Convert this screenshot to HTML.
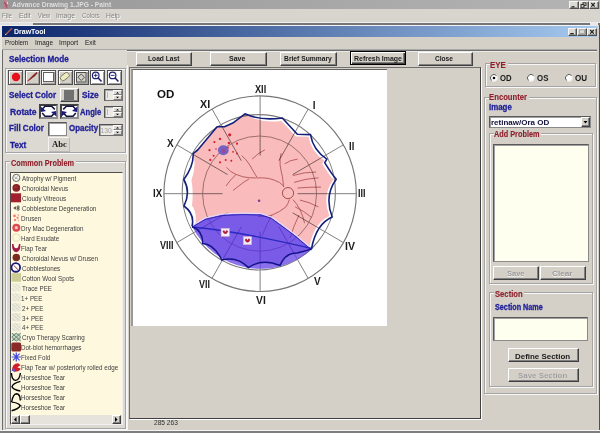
<!DOCTYPE html><html><head><meta charset="utf-8"><style>
html,body{margin:0;padding:0;width:600px;height:433px;overflow:hidden;background:#d4d0c8}
body>div,body>svg{position:absolute}
</style></head><body>
<div style="left:0px;top:0px;width:600px;height:9px;background:linear-gradient(90deg,#989898,#b4b4b4);"></div>
<div style="left:11.81px;top:0.59px;font:bold 7.40px/8.88px 'Liberation Sans',sans-serif;color:#dedede;white-space:nowrap;transform:scaleX(0.904);transform-origin:0.19px 0;">Advance Drawing 1.JPG - Paint</div>
<div style="left:569px;top:1px;width:10px;height:8px;background:#dcdad4;border-top:1px solid #f4f4f4;border-left:1px solid #f4f4f4;border-right:1px solid #505050;border-bottom:1px solid #505050;box-sizing:border-box;box-shadow:inset -1px -1px #989898;"></div>
<div style="left:579px;top:1px;width:10px;height:8px;background:#dcdad4;border-top:1px solid #f4f4f4;border-left:1px solid #f4f4f4;border-right:1px solid #505050;border-bottom:1px solid #505050;box-sizing:border-box;box-shadow:inset -1px -1px #989898;"></div>
<div style="left:589px;top:1px;width:10px;height:8px;background:#dcdad4;border-top:1px solid #f4f4f4;border-left:1px solid #f4f4f4;border-right:1px solid #505050;border-bottom:1px solid #505050;box-sizing:border-box;box-shadow:inset -1px -1px #989898;"></div>
<svg style="left:569px;top:1px" width="30" height="8"><path d="M2.5 5.8 H5.5" stroke="#202020" stroke-width="1.2"/><rect x="14" y="1.8" width="3" height="2.6" fill="none" stroke="#202020" stroke-width="0.9"/><rect x="12" y="3.6" width="3" height="2.6" fill="#dcdad4" stroke="#202020" stroke-width="0.9"/><path d="M22.3 2 L25.7 5.6 M25.7 2 L22.3 5.6" stroke="#202020" stroke-width="1.1"/></svg>
<svg style="left:0px;top:0px" width="10" height="9"><rect x="0.5" y="2" width="3" height="5" fill="#8a9a90" opacity="0.6"/><path d="M3.5 0.5 L7.5 1 L8.3 8.8 L4 8.8 Z" fill="#c07a8a"/><path d="M4.5 2 L7 7.5" stroke="#8a4050" stroke-width="0.9"/><path d="M7.2 1.5 L7.6 4" stroke="#f0e0e8" stroke-width="0.9"/></svg>
<div style="left:0px;top:9px;width:600px;height:13px;background:#d8d5ce;"></div>
<div style="left:3.02px;top:12.69px;font:normal 7.30px/8.76px 'Liberation Sans',sans-serif;color:#ffffff;white-space:nowrap;transform:scaleX(0.827);transform-origin:0.58px 0;">File</div>
<div style="left:2.42px;top:12.09px;font:normal 7.30px/8.76px 'Liberation Sans',sans-serif;color:#808080;white-space:nowrap;transform:scaleX(0.827);transform-origin:0.58px 0;">File</div>
<div style="left:20.02px;top:12.69px;font:normal 7.30px/8.76px 'Liberation Sans',sans-serif;color:#ffffff;white-space:nowrap;transform:scaleX(0.922);transform-origin:0.58px 0;">Edit</div>
<div style="left:19.42px;top:12.09px;font:normal 7.30px/8.76px 'Liberation Sans',sans-serif;color:#808080;white-space:nowrap;transform:scaleX(0.922);transform-origin:0.58px 0;">Edit</div>
<div style="left:38.56px;top:12.69px;font:normal 7.30px/8.76px 'Liberation Sans',sans-serif;color:#ffffff;white-space:nowrap;transform:scaleX(0.766);transform-origin:0.04px 0;">View</div>
<div style="left:37.96px;top:12.09px;font:normal 7.30px/8.76px 'Liberation Sans',sans-serif;color:#808080;white-space:nowrap;transform:scaleX(0.766);transform-origin:0.04px 0;">View</div>
<div style="left:56.94px;top:12.69px;font:normal 7.30px/8.76px 'Liberation Sans',sans-serif;color:#ffffff;white-space:nowrap;transform:scaleX(0.930);transform-origin:0.66px 0;">Image</div>
<div style="left:56.34px;top:12.09px;font:normal 7.30px/8.76px 'Liberation Sans',sans-serif;color:#808080;white-space:nowrap;transform:scaleX(0.930);transform-origin:0.66px 0;">Image</div>
<div style="left:82.23px;top:12.69px;font:normal 7.30px/8.76px 'Liberation Sans',sans-serif;color:#ffffff;white-space:nowrap;transform:scaleX(0.830);transform-origin:0.36px 0;">Colors</div>
<div style="left:81.64px;top:12.09px;font:normal 7.30px/8.76px 'Liberation Sans',sans-serif;color:#808080;white-space:nowrap;transform:scaleX(0.830);transform-origin:0.36px 0;">Colors</div>
<div style="left:107.02px;top:12.69px;font:normal 7.30px/8.76px 'Liberation Sans',sans-serif;color:#ffffff;white-space:nowrap;transform:scaleX(0.920);transform-origin:0.58px 0;">Help</div>
<div style="left:106.42px;top:12.09px;font:normal 7.30px/8.76px 'Liberation Sans',sans-serif;color:#808080;white-space:nowrap;transform:scaleX(0.920);transform-origin:0.58px 0;">Help</div>
<div style="left:0px;top:22px;width:600px;height:1px;background:#ececec;"></div>
<div style="left:33px;top:23px;width:567px;height:2px;background:#767676;"></div>
<div style="left:0px;top:23px;width:33px;height:2px;background:#dedede;"></div>
<div style="left:0px;top:25px;width:600px;height:408px;background:#d4d0c8;"></div>
<div style="left:0px;top:25px;width:600px;height:1px;background:#f2f2f6;"></div>
<div style="left:0px;top:26px;width:2px;height:407px;background:#e8e6e0;"></div>
<div style="left:2px;top:26px;width:596px;height:11px;background:linear-gradient(90deg,#0a246a 0%,#a6caf0 100%);"></div>
<svg style="left:4px;top:27px" width="9" height="9"><path d="M1.2 8 L8 1.2" stroke="#b05a40" stroke-width="1.3"/><path d="M1.2 8 L2.4 6.8" stroke="#e8d0c0" stroke-width="1"/></svg>
<div style="left:13.56px;top:28.16px;font:bold 6.80px/8.16px 'Liberation Sans',sans-serif;color:#ffffff;white-space:nowrap;transform:scaleX(1.031);transform-origin:0.44px 0;">DrawTool</div>
<div style="left:568px;top:28px;width:9px;height:8px;background:#dcdad4;border-top:1px solid #f4f4f4;border-left:1px solid #f4f4f4;border-right:1px solid #505050;border-bottom:1px solid #505050;box-sizing:border-box;box-shadow:inset -1px -1px #989898;"></div>
<div style="left:577px;top:28px;width:10px;height:8px;background:#dcdad4;border-top:1px solid #f4f4f4;border-left:1px solid #f4f4f4;border-right:1px solid #505050;border-bottom:1px solid #505050;box-sizing:border-box;box-shadow:inset -1px -1px #989898;"></div>
<div style="left:587px;top:28px;width:10px;height:8px;background:#dcdad4;border-top:1px solid #f4f4f4;border-left:1px solid #f4f4f4;border-right:1px solid #505050;border-bottom:1px solid #505050;box-sizing:border-box;box-shadow:inset -1px -1px #989898;"></div>
<svg style="left:568px;top:28px" width="30" height="8"><path d="M2.3 5.6 H5.7" stroke="#202020" stroke-width="1.2"/><rect x="11.5" y="1.8" width="5" height="3.6" fill="none" stroke="#a0a0a0" stroke-width="0.9"/><path d="M22.2 2 L25.8 5.6 M25.8 2 L22.2 5.6" stroke="#202020" stroke-width="1.2"/></svg>
<div style="left:597px;top:25px;width:2px;height:408px;background:#d4d0c8;"></div>
<div style="left:599px;top:25px;width:1px;height:408px;background:#505050;"></div>
<div style="left:590px;top:23px;width:8px;height:3px;background:#e8e8e8;"></div>
<div style="left:5.02px;top:38.99px;font:normal 7.30px/8.76px 'Liberation Sans',sans-serif;color:#202020;white-space:nowrap;transform:scaleX(0.849);transform-origin:0.58px 0;">Problem</div>
<div style="left:34.54px;top:38.99px;font:normal 7.30px/8.76px 'Liberation Sans',sans-serif;color:#202020;white-space:nowrap;transform:scaleX(0.884);transform-origin:0.66px 0;">Image</div>
<div style="left:59.04px;top:38.99px;font:normal 7.30px/8.76px 'Liberation Sans',sans-serif;color:#202020;white-space:nowrap;transform:scaleX(0.927);transform-origin:0.66px 0;">Import</div>
<div style="left:85.02px;top:38.99px;font:normal 7.30px/8.76px 'Liberation Sans',sans-serif;color:#202020;white-space:nowrap;transform:scaleX(0.884);transform-origin:0.58px 0;">Exit</div>
<div style="left:2px;top:49px;width:595px;height:1px;background:#a8a8a8;"></div>
<div style="left:2px;top:50px;width:595px;height:1px;background:#6e6e6e;"></div>
<div style="left:3px;top:51px;width:594px;height:1px;background:#eceae6;"></div>
<div style="left:2px;top:50px;width:1px;height:380px;background:#6a6a6a;"></div>
<div style="left:3px;top:50px;width:124px;height:380px;background:#dcd9d2;"></div>
<div style="left:127px;top:65px;width:1px;height:365px;background:#f4f4f4;"></div>
<div style="left:8.63px;top:53.97px;font:bold 8.90px/10.68px 'Liberation Sans',sans-serif;color:#1e1e98;white-space:nowrap;transform:scaleX(0.919);transform-origin:0.27px 0;-webkit-text-stroke:0.3px #1e1e98;">Selection Mode</div>
<div style="left:5px;top:68px;width:121px;height:85px;border:1px solid #a4a4a4;box-sizing:border-box;box-shadow:1px 1px #f8f8f8, inset 1px 1px #f8f8f8;"></div>
<div style="left:8px;top:70px;width:15px;height:15px;background:#d4d0c8;border:1px solid #505050;box-sizing:border-box;box-shadow:inset 1px 1px #fff, inset -1px -1px #a0a0a0;"></div>
<div style="left:25px;top:70px;width:15px;height:15px;background:#d4d0c8;border:1px solid #505050;box-sizing:border-box;box-shadow:inset 1px 1px #fff, inset -1px -1px #a0a0a0;"></div>
<div style="left:41px;top:70px;width:15px;height:15px;background:#d4d0c8;border:1px solid #505050;box-sizing:border-box;box-shadow:inset 1px 1px #fff, inset -1px -1px #a0a0a0;"></div>
<div style="left:58px;top:70px;width:15px;height:15px;background:#d4d0c8;border:1px solid #505050;box-sizing:border-box;box-shadow:inset 1px 1px #fff, inset -1px -1px #a0a0a0;"></div>
<div style="left:74px;top:70px;width:15px;height:15px;background:#d4d0c8;border:1px solid #505050;box-sizing:border-box;box-shadow:inset 1px 1px #fff, inset -1px -1px #a0a0a0;"></div>
<div style="left:90px;top:70px;width:15px;height:15px;background:#fff;border:1px solid #505050;box-sizing:border-box;box-shadow:inset 1px 1px #fff, inset -1px -1px #a0a0a0;"></div>
<div style="left:107px;top:70px;width:15px;height:15px;background:#fff;border:1px solid #505050;box-sizing:border-box;box-shadow:inset 1px 1px #fff, inset -1px -1px #a0a0a0;"></div>
<svg style="left:0;top:0" width="130" height="160"><circle cx="16" cy="77" r="4.2" fill="#e8101c"/><path d="M27.2 81 L33.6 74.6 L36.6 72 Q37.8 72.4 37.3 73.6 L34.8 76.2 L28 81.6 Z" fill="#8a2424"/><path d="M27.2 81 L29 79.6" stroke="#d08080" stroke-width="0.8"/><rect x="43.5" y="72.5" width="10" height="9" fill="#fff" stroke="#606060" stroke-width="1"/><rect x="-4.8" y="-2.6" width="9.6" height="5.2" rx="2" transform="translate(64.8 76.6) rotate(-38)" fill="#ecebc0" stroke="#6a6a58" stroke-width="0.8"/><rect x="76.5" y="72.5" width="9.5" height="9.5" fill="none" stroke="#505050" stroke-width="1"/><path d="M81.2 74 L84.5 77.2 L81.2 80.5 L78 77.2 Z" fill="none" stroke="#505050" stroke-width="1"/><circle cx="95.7" cy="75.4" r="3.3" fill="#fff" stroke="#202070" stroke-width="1.2"/><path d="M98 77.8 L101.5 81.5" stroke="#202070" stroke-width="1.6"/><path d="M93.8 75.4 H97.6 M95.7 73.5 V77.3" stroke="#202070" stroke-width="0.9"/><circle cx="112.6" cy="75.4" r="3.3" fill="#fff" stroke="#202070" stroke-width="1.2"/><path d="M114.9 77.8 L118.4 81.5" stroke="#202070" stroke-width="1.6"/><path d="M110.7 75.4 H114.5" stroke="#202070" stroke-width="0.9"/></svg>
<div style="left:9.44px;top:90.26px;font:bold 8.60px/10.32px 'Liberation Sans',sans-serif;color:#1e1e98;white-space:nowrap;transform:scaleX(0.940);transform-origin:0.26px 0;-webkit-text-stroke:0.3px #1e1e98;">Select Color</div>
<div style="left:60px;top:88px;width:19px;height:14px;background:#d4d0c8;border-top:1px solid #fff;border-left:1px solid #fff;border-right:1px solid #404040;border-bottom:1px solid #404040;box-sizing:border-box;box-shadow:inset -1px -1px #808080;"></div>
<div style="left:64px;top:90px;width:10px;height:10px;background:#707070;"></div>
<div style="left:81.54px;top:90.26px;font:bold 8.60px/10.32px 'Liberation Sans',sans-serif;color:#1e1e98;white-space:nowrap;transform:scaleX(0.971);transform-origin:0.26px 0;-webkit-text-stroke:0.3px #1e1e98;">Size</div>
<div style="left:104px;top:89px;width:19px;height:12px;background:#eceae4;border:1px solid #505050;border-right-color:#707070;border-bottom-color:#707070;box-sizing:border-box;box-shadow:inset 1px 1px #a8a8a8;"></div>
<div style="left:113px;top:90px;width:9px;height:5px;background:#dedbd4;border-left:1px solid #fff;border-top:1px solid #fff;border-right:1px solid #808080;border-bottom:1px solid #808080;box-sizing:border-box;"></div>
<div style="left:113px;top:95px;width:9px;height:5px;background:#dedbd4;border-left:1px solid #fff;border-top:1px solid #fff;border-right:1px solid #808080;border-bottom:1px solid #808080;box-sizing:border-box;"></div>
<svg style="left:113px;top:89px" width="9" height="12"><path d="M3 4.5 L4.5 2.9 L6 4.5Z M3 7.7 L4.5 9.3 L6 7.7Z" fill="#000"/></svg>
<div style="left:107px;top:92px;width:1px;height:6px;background:#b8b8b8;"></div>
<div style="left:9.94px;top:107.26px;font:bold 8.60px/10.32px 'Liberation Sans',sans-serif;color:#1e1e98;white-space:nowrap;transform:scaleX(0.995);transform-origin:0.56px 0;-webkit-text-stroke:0.3px #1e1e98;">Rotate</div>
<div style="left:39px;top:104px;width:19px;height:15px;background:#fff;border:2px solid #404040;border-right-color:#909090;border-bottom-color:#909090;box-sizing:border-box;"></div>
<svg style="left:39px;top:104px" width="19" height="15"><g ><path d="M3.2 5.2 L6 2.3 L12.6 2.3 L15.8 5.4" fill="none" stroke="#141440" stroke-width="1.6"/><path d="M15.8 8.6 L12.6 12.2 L6 12.2 L3.2 9" fill="none" stroke="#141440" stroke-width="1.6"/><path d="M1.6 2.4 L1.9 8 L7 7 Z" fill="#1a1a80"/><path d="M17.4 12.6 L17.1 7 L12 8 Z" fill="#1a1a80"/></g></svg>
<div style="left:60px;top:104px;width:19px;height:15px;background:#fff;border:2px solid #404040;border-right-color:#909090;border-bottom-color:#909090;box-sizing:border-box;"></div>
<svg style="left:60px;top:104px" width="19" height="15"><g transform="translate(19,0) scale(-1,1)"><path d="M3.2 5.2 L6 2.3 L12.6 2.3 L15.8 5.4" fill="none" stroke="#141440" stroke-width="1.6"/><path d="M15.8 8.6 L12.6 12.2 L6 12.2 L3.2 9" fill="none" stroke="#141440" stroke-width="1.6"/><path d="M1.6 2.4 L1.9 8 L7 7 Z" fill="#1a1a80"/><path d="M17.4 12.6 L17.1 7 L12 8 Z" fill="#1a1a80"/></g></svg>
<div style="left:80.48px;top:107.06px;font:bold 8.60px/10.32px 'Liberation Sans',sans-serif;color:#1e1e98;white-space:nowrap;transform:scaleX(0.889);transform-origin:0.21px 0;-webkit-text-stroke:0.3px #1e1e98;">Angle</div>
<div style="left:104px;top:106px;width:19px;height:12px;background:#eceae4;border:1px solid #505050;border-right-color:#707070;border-bottom-color:#707070;box-sizing:border-box;box-shadow:inset 1px 1px #a8a8a8;"></div>
<div style="left:113px;top:107px;width:9px;height:5px;background:#dedbd4;border-left:1px solid #fff;border-top:1px solid #fff;border-right:1px solid #808080;border-bottom:1px solid #808080;box-sizing:border-box;"></div>
<div style="left:113px;top:112px;width:9px;height:5px;background:#dedbd4;border-left:1px solid #fff;border-top:1px solid #fff;border-right:1px solid #808080;border-bottom:1px solid #808080;box-sizing:border-box;"></div>
<svg style="left:113px;top:106px" width="9" height="12"><path d="M3 4.5 L4.5 2.9 L6 4.5Z M3 7.7 L4.5 9.3 L6 7.7Z" fill="#000"/></svg>
<div style="left:107px;top:109px;width:1px;height:6px;background:#b8b8b8;"></div>
<div style="left:8.84px;top:123.36px;font:bold 8.60px/10.32px 'Liberation Sans',sans-serif;color:#1e1e98;white-space:nowrap;transform:scaleX(0.935);transform-origin:0.56px 0;-webkit-text-stroke:0.3px #1e1e98;">Fill Color</div>
<div style="left:48px;top:122px;width:19px;height:14px;background:#fff;border:1px solid #5a5a5a;border-right-color:#8a8a8a;border-bottom-color:#8a8a8a;box-sizing:border-box;box-shadow:inset 1px 1px #a0a0a0;"></div>
<div style="left:68.66px;top:123.16px;font:bold 8.60px/10.32px 'Liberation Sans',sans-serif;color:#1e1e98;white-space:nowrap;transform:scaleX(0.922);transform-origin:0.34px 0;-webkit-text-stroke:0.3px #1e1e98;">Opacity</div>
<div style="left:99px;top:124px;width:24px;height:12px;background:#eceae4;border:1px solid #505050;border-right-color:#707070;border-bottom-color:#707070;box-sizing:border-box;box-shadow:inset 1px 1px #a8a8a8;"></div>
<div style="left:113px;top:125px;width:9px;height:5px;background:#dedbd4;border-left:1px solid #fff;border-top:1px solid #fff;border-right:1px solid #808080;border-bottom:1px solid #808080;box-sizing:border-box;"></div>
<div style="left:113px;top:130px;width:9px;height:5px;background:#dedbd4;border-left:1px solid #fff;border-top:1px solid #fff;border-right:1px solid #808080;border-bottom:1px solid #808080;box-sizing:border-box;"></div>
<svg style="left:113px;top:124px" width="9" height="12"><path d="M3 4.5 L4.5 2.9 L6 4.5Z M3 7.7 L4.5 9.3 L6 7.7Z" fill="#000"/></svg>
<div style="left:100.49px;top:126.61px;font:normal 6.75px/8.1px 'Liberation Sans',sans-serif;color:#a0a0a0;white-space:nowrap;">130</div>
<div style="left:9.61px;top:139.56px;font:bold 8.60px/10.32px 'Liberation Sans',sans-serif;color:#1e1e98;white-space:nowrap;transform:scaleX(0.955);transform-origin:0.09px 0;-webkit-text-stroke:0.3px #1e1e98;">Text</div>
<div style="left:48px;top:137px;width:22px;height:15px;background:#d8d5ce;border-top:1px solid #f4f4f4;border-left:1px solid #f4f4f4;border-right:1px solid #b8b8b8;border-bottom:1px solid #b8b8b8;box-sizing:border-box;"></div>
<div style="left:51.51px;top:138.94px;font:bold 8.60px/10.32px 'Liberation Serif',serif;color:#202020;white-space:nowrap;transform:scaleX(1.005);transform-origin:0.09px 0;">Abc</div>
<div style="left:5px;top:161px;width:121px;height:268px;border:1px solid #a4a4a4;box-sizing:border-box;box-shadow:1px 1px #f8f8f8, inset 1px 1px #f8f8f8;"></div>
<div style="left:10px;top:157px;width:66px;height:8px;background:#dcd9d2;"></div>
<div style="left:11.05px;top:157.87px;font:bold 8.80px/10.56px 'Liberation Sans',sans-serif;color:#8e1e2a;white-space:nowrap;transform:scaleX(0.830);transform-origin:0.35px 0;-webkit-text-stroke:0.12px #8e1e2a;">Common Problem</div>
<div style="left:10px;top:172px;width:113px;height:253px;background:#fdf8de;border-top:1px solid #505050;border-left:1px solid #505050;border-right:1px solid #f0f0f0;border-bottom:1px solid #f0f0f0;box-sizing:border-box;"></div>
<div style="left:22.00px;top:174.21px;font:normal 7.60px/9.12px 'Liberation Sans',sans-serif;color:#3c3c3c;white-space:nowrap;transform:scaleX(0.822);transform-origin:0.00px 0;">Atrophy w/ Pigment</div>
<div style="left:21.62px;top:184.16px;font:normal 7.60px/9.12px 'Liberation Sans',sans-serif;color:#3c3c3c;white-space:nowrap;transform:scaleX(0.822);transform-origin:0.38px 0;">Choroidal Nevus</div>
<div style="left:21.62px;top:194.11px;font:normal 7.60px/9.12px 'Liberation Sans',sans-serif;color:#3c3c3c;white-space:nowrap;transform:scaleX(0.822);transform-origin:0.38px 0;">Cloudy Vitreous</div>
<div style="left:21.62px;top:204.06px;font:normal 7.60px/9.12px 'Liberation Sans',sans-serif;color:#3c3c3c;white-space:nowrap;transform:scaleX(0.822);transform-origin:0.38px 0;">Cobblestone Degeneration</div>
<div style="left:21.39px;top:214.01px;font:normal 7.60px/9.12px 'Liberation Sans',sans-serif;color:#3c3c3c;white-space:nowrap;transform:scaleX(0.822);transform-origin:0.61px 0;">Drusen</div>
<div style="left:21.39px;top:223.96px;font:normal 7.60px/9.12px 'Liberation Sans',sans-serif;color:#3c3c3c;white-space:nowrap;transform:scaleX(0.822);transform-origin:0.61px 0;">Dry Mac Degeneration</div>
<div style="left:21.39px;top:233.91px;font:normal 7.60px/9.12px 'Liberation Sans',sans-serif;color:#3c3c3c;white-space:nowrap;transform:scaleX(0.822);transform-origin:0.61px 0;">Hard Exudate</div>
<div style="left:21.39px;top:243.86px;font:normal 7.60px/9.12px 'Liberation Sans',sans-serif;color:#3c3c3c;white-space:nowrap;transform:scaleX(0.822);transform-origin:0.61px 0;">Flap Tear</div>
<div style="left:21.62px;top:253.81px;font:normal 7.60px/9.12px 'Liberation Sans',sans-serif;color:#3c3c3c;white-space:nowrap;transform:scaleX(0.822);transform-origin:0.38px 0;">Choroidal Nevus w/ Drusen</div>
<div style="left:21.62px;top:263.76px;font:normal 7.60px/9.12px 'Liberation Sans',sans-serif;color:#3c3c3c;white-space:nowrap;transform:scaleX(0.822);transform-origin:0.38px 0;">Cobblestones</div>
<div style="left:21.62px;top:273.71px;font:normal 7.60px/9.12px 'Liberation Sans',sans-serif;color:#3c3c3c;white-space:nowrap;transform:scaleX(0.822);transform-origin:0.38px 0;">Cotton Wool Spots</div>
<div style="left:21.85px;top:283.66px;font:normal 7.60px/9.12px 'Liberation Sans',sans-serif;color:#3c3c3c;white-space:nowrap;transform:scaleX(0.822);transform-origin:0.15px 0;">Trace PEE</div>
<div style="left:21.43px;top:293.61px;font:normal 7.60px/9.12px 'Liberation Sans',sans-serif;color:#3c3c3c;white-space:nowrap;transform:scaleX(0.822);transform-origin:0.57px 0;">1+ PEE</div>
<div style="left:21.62px;top:303.56px;font:normal 7.60px/9.12px 'Liberation Sans',sans-serif;color:#3c3c3c;white-space:nowrap;transform:scaleX(0.822);transform-origin:0.38px 0;">2+ PEE</div>
<div style="left:21.70px;top:313.51px;font:normal 7.60px/9.12px 'Liberation Sans',sans-serif;color:#3c3c3c;white-space:nowrap;transform:scaleX(0.822);transform-origin:0.30px 0;">3+ PEE</div>
<div style="left:21.85px;top:323.46px;font:normal 7.60px/9.12px 'Liberation Sans',sans-serif;color:#3c3c3c;white-space:nowrap;transform:scaleX(0.822);transform-origin:0.15px 0;">4+ PEE</div>
<div style="left:21.62px;top:333.41px;font:normal 7.60px/9.12px 'Liberation Sans',sans-serif;color:#3c3c3c;white-space:nowrap;transform:scaleX(0.822);transform-origin:0.38px 0;">Cryo Therapy Scarring</div>
<div style="left:21.39px;top:343.36px;font:normal 7.60px/9.12px 'Liberation Sans',sans-serif;color:#3c3c3c;white-space:nowrap;transform:scaleX(0.822);transform-origin:0.61px 0;">Dot-blot hemorrhages</div>
<div style="left:21.39px;top:353.31px;font:normal 7.60px/9.12px 'Liberation Sans',sans-serif;color:#3c3c3c;white-space:nowrap;transform:scaleX(0.822);transform-origin:0.61px 0;">Fixed Fold</div>
<div style="left:21.39px;top:363.26px;font:normal 7.60px/9.12px 'Liberation Sans',sans-serif;color:#3c3c3c;white-space:nowrap;transform:scaleX(0.822);transform-origin:0.61px 0;">Flap Tear w/ posteriorly rolled edge</div>
<div style="left:21.39px;top:373.21px;font:normal 7.60px/9.12px 'Liberation Sans',sans-serif;color:#3c3c3c;white-space:nowrap;transform:scaleX(0.822);transform-origin:0.61px 0;">Horseshoe Tear</div>
<div style="left:21.39px;top:383.16px;font:normal 7.60px/9.12px 'Liberation Sans',sans-serif;color:#3c3c3c;white-space:nowrap;transform:scaleX(0.822);transform-origin:0.61px 0;">Horseshoe Tear</div>
<div style="left:21.39px;top:393.11px;font:normal 7.60px/9.12px 'Liberation Sans',sans-serif;color:#3c3c3c;white-space:nowrap;transform:scaleX(0.822);transform-origin:0.61px 0;">Horseshoe Tear</div>
<div style="left:21.39px;top:403.06px;font:normal 7.60px/9.12px 'Liberation Sans',sans-serif;color:#3c3c3c;white-space:nowrap;transform:scaleX(0.822);transform-origin:0.61px 0;">Horseshoe Tear</div>
<svg style="left:0;top:0" width="130" height="433"><g transform="translate(16.3 177.90)"><circle r="3.6" fill="#f4f4f0" stroke="#6a6a6a" stroke-width="1"/><path d="M-2 -1 L2 1.5 M-1.5 1.5 L1 -1.5" stroke="#a0a0a0" stroke-width="0.8"/></g><g transform="translate(16.3 187.85)"><circle r="3.9" fill="#8a2228"/><circle cx="-0.8" cy="-0.8" r="1.5" fill="#a83a3a" opacity="0.6"/></g><g transform="translate(16.3 197.80)"><rect x="-5.5" y="-4.5" width="10.3" height="9" fill="#a0222e"/></g><g transform="translate(16.3 207.75)"><path d="M-3 0.3 L-0.5 -1.6 L-0.5 2 Z" fill="#404040"/><circle cx="1.8" cy="-0.7" r="1.1" fill="none" stroke="#404040" stroke-width="0.9"/><circle cx="1.8" cy="1.4" r="1.1" fill="none" stroke="#404040" stroke-width="0.9"/></g><g transform="translate(16.3 217.70)"><circle cx="-1.8" cy="-1.8" r="1.3" fill="#f07868"/><circle cx="1.3" cy="0" r="1.3" fill="#f09888"/><circle cx="-1.3" cy="2.2" r="1.2" fill="#f08878"/><circle cx="2" cy="-2.6" r="1" fill="#f4a898"/><circle cx="2.2" cy="2.8" r="0.9" fill="#f4b0a0"/></g><g transform="translate(16.3 227.65)"><circle r="4" fill="#e04850"/><circle r="1.6" fill="#f8c8c8"/></g><g transform="translate(16.3 237.60)"><circle r="3.8" fill="#fcf8dc" stroke="#e8e0b4" stroke-width="1"/></g><g transform="translate(16.3 247.55)"><path d="M-4.3 -3.6 L-2.8 -3.6 Q-2.5 0.6 -0.1 0.6 Q2.3 0.6 2.6 -3.6 L4.1 -3.6 Q4.3 4.4 -0.1 4.6 Q-4.5 4.4 -4.3 -3.6 Z" fill="#a41a48"/></g><g transform="translate(16.3 257.50)"><circle r="3.8" fill="#7a2c20"/></g><g transform="translate(16.3 267.45)"><circle cx="-0.5" cy="0" r="4.3" fill="#fff" stroke="#1a1a78" stroke-width="1.8"/><path d="M-2.7 -2.2 L1.7 2.2" stroke="#902828" stroke-width="1"/></g><g transform="translate(16.3 277.40)"><rect x="-4.8" y="-4.2" width="9.6" height="8.5" fill="#cccc94"/></g><g transform="translate(16.3 287.35)"><g opacity="0.35"><rect x="-4.5" y="-4.2" width="9" height="8.5" fill="#d8dcd8"/><path d="M-4 -3 L3 3.5 M-1 -4 L4 1 M-4 1 L-1 4" stroke="#909890" stroke-width="0.7"/></g></g><g transform="translate(16.3 297.30)"><g opacity="0.4"><rect x="-4.5" y="-4.2" width="9" height="8.5" fill="#d8dcd8"/><path d="M-4 -3 L3 3.5 M-1 -4 L4 1 M-4 1 L-1 4" stroke="#909890" stroke-width="0.7"/></g></g><g transform="translate(16.3 307.25)"><g opacity="0.45"><rect x="-4.5" y="-4.2" width="9" height="8.5" fill="#d8dcd8"/><path d="M-4 -3 L3 3.5 M-1 -4 L4 1 M-4 1 L-1 4" stroke="#909890" stroke-width="0.7"/></g></g><g transform="translate(16.3 317.20)"><g opacity="0.5"><rect x="-4.5" y="-4.2" width="9" height="8.5" fill="#d8dcd8"/><path d="M-4 -3 L3 3.5 M-1 -4 L4 1 M-4 1 L-1 4" stroke="#909890" stroke-width="0.7"/></g></g><g transform="translate(16.3 327.15)"><g opacity="0.45"><rect x="-4.5" y="-4.2" width="9" height="8.5" fill="#d8dcd8"/><path d="M-4 -3 L3 3.5 M-1 -4 L4 1 M-4 1 L-1 4" stroke="#909890" stroke-width="0.7"/></g></g><g transform="translate(16.3 337.10)"><rect x="-4.5" y="-4" width="9" height="8" fill="#c8d4c8"/><path d="M-4.5 -4 L4.5 4 M4.5 -4 L-4.5 4 M0 -4 L4.5 0 L0 4 L-4.5 0 Z" fill="none" stroke="#5a7a5a" stroke-width="0.8"/></g><g transform="translate(16.3 347.05)"><rect x="-5" y="-4.6" width="9.8" height="9" rx="1.5" fill="#8a2a26"/></g><g transform="translate(16.3 357.00)"><path d="M-4.6 0 H4.6 M0 -4.5 V4.5 M-3.3 -3.3 L3.3 3.3 M3.3 -3.3 L-3.3 3.3" stroke="#4048e0" stroke-width="1.2"/></g><g transform="translate(16.3 366.95)"><path d="M-4.5 3.5 Q-4 -3.6 1.8 -3.6 L4.3 -1.6 L1 0.4 L4.5 1.8 Q3 5 -2 4.8 Z" fill="#d01e2c"/><path d="M-4.8 3.8 L-2.2 0.8 L-1 4.8 Z" fill="#5060d0"/></g><path d="M11.4 373 Q12 380.5 15.6 380.4 Q19.5 380 20.4 373" fill="none" stroke="#000" stroke-width="1.4"/><path d="M20.4 381.4 Q12.5 383.5 12 386.8 Q13 389.8 20.4 391" fill="none" stroke="#000" stroke-width="1.4"/><path d="M11.6 402 Q13 394 16.4 393.7 Q20.3 394 20.3 400.6" fill="none" stroke="#000" stroke-width="1.4"/><path d="M11.6 402.1 Q18 402.5 20.3 405.7 Q18.5 409 11.6 410.8" fill="none" stroke="#000" stroke-width="1.4"/></svg>
<div style="left:11px;top:415px;width:111px;height:9px;background:#e6e3dc;"></div>
<div style="left:11px;top:415px;width:9px;height:9px;background:#d4d0c8;border-top:1px solid #fff;border-left:1px solid #fff;border-right:1px solid #404040;border-bottom:1px solid #404040;box-sizing:border-box;box-shadow:inset -1px -1px #808080;"></div>
<div style="left:20px;top:415px;width:10px;height:9px;background:#d4d0c8;border-top:1px solid #fff;border-left:1px solid #fff;border-right:1px solid #404040;border-bottom:1px solid #404040;box-sizing:border-box;box-shadow:inset -1px -1px #808080;"></div>
<div style="left:112px;top:415px;width:9px;height:9px;background:#d4d0c8;border-top:1px solid #fff;border-left:1px solid #fff;border-right:1px solid #404040;border-bottom:1px solid #404040;box-sizing:border-box;box-shadow:inset -1px -1px #808080;"></div>
<svg style="left:11px;top:415px" width="111" height="9"><path d="M3 4.5 L5.5 2 L5.5 7 Z M5.5+0 0" fill="#000"/><path d="M104 2 L106.5 4.5 L104 7 Z" fill="#000"/></svg>
<div style="left:0px;top:430px;width:600px;height:1px;background:#f4f4f4;"></div>
<div style="left:0px;top:431px;width:600px;height:2px;background:#7e7e7e;"></div>
<div style="left:136px;top:52px;width:56px;height:14px;background:#d4d0c8;border-top:1px solid #fff;border-left:1px solid #fff;border-right:1px solid #404040;border-bottom:1px solid #404040;box-sizing:border-box;box-shadow:inset -1px -1px #808080;"></div>
<div style="left:148.21px;top:53.51px;font:bold 7.60px/9.12px 'Liberation Sans',sans-serif;color:#1a1a1a;white-space:nowrap;transform:scaleX(0.872);transform-origin:0.49px 0;">Load Last</div>
<div style="left:210px;top:52px;width:57px;height:14px;background:#d4d0c8;border-top:1px solid #fff;border-left:1px solid #fff;border-right:1px solid #404040;border-bottom:1px solid #404040;box-sizing:border-box;box-shadow:inset -1px -1px #808080;"></div>
<div style="left:228.77px;top:53.51px;font:bold 7.60px/9.12px 'Liberation Sans',sans-serif;color:#1a1a1a;white-space:nowrap;transform:scaleX(0.925);transform-origin:0.23px 0;">Save</div>
<div style="left:280px;top:52px;width:57px;height:14px;background:#d4d0c8;border-top:1px solid #fff;border-left:1px solid #fff;border-right:1px solid #404040;border-bottom:1px solid #404040;box-sizing:border-box;box-shadow:inset -1px -1px #808080;"></div>
<div style="left:283.71px;top:53.51px;font:bold 7.60px/9.12px 'Liberation Sans',sans-serif;color:#1a1a1a;white-space:nowrap;transform:scaleX(0.883);transform-origin:0.49px 0;">Brief Summary</div>
<div style="left:350px;top:51px;width:56px;height:14px;background:#d4d0c8;border:1px solid #000;box-sizing:border-box;box-shadow:inset 1px 1px #fff, inset -1px -1px #404040, inset -2px -2px #808080;"></div>
<div style="left:354.01px;top:53.51px;font:bold 7.60px/9.12px 'Liberation Sans',sans-serif;color:#1a1a1a;white-space:nowrap;transform:scaleX(0.916);transform-origin:0.49px 0;">Refresh Image</div>
<div style="left:418px;top:52px;width:55px;height:14px;background:#d4d0c8;border-top:1px solid #fff;border-left:1px solid #fff;border-right:1px solid #404040;border-bottom:1px solid #404040;box-sizing:border-box;box-shadow:inset -1px -1px #808080;"></div>
<div style="left:435.30px;top:53.51px;font:bold 7.60px/9.12px 'Liberation Sans',sans-serif;color:#1a1a1a;white-space:nowrap;transform:scaleX(0.864);transform-origin:0.30px 0;">Close</div>
<div style="left:129px;top:67px;width:352px;height:352px;border-left:1px solid #707070;border-top:1px solid #707070;border-right:1px solid #404040;border-bottom:1px solid #404040;box-sizing:border-box;box-shadow:1px 1px #fff;"></div>
<div style="left:131px;top:69px;width:256px;height:257px;background:#fff;border-top:1px solid #606060;border-left:2px solid #9a9a9a;box-sizing:border-box;"></div>
<div style="left:153.66px;top:419.16px;font:normal 6.80px/8.16px 'Liberation Sans',sans-serif;color:#303030;white-space:nowrap;transform:scaleX(0.972);transform-origin:0.34px 0;">285 263</div>
<div style="left:485px;top:63px;width:111px;height:24px;border:1px solid #a4a4a4;box-sizing:border-box;box-shadow:1px 1px #f8f8f8, inset 1px 1px #f8f8f8;"></div>
<div style="left:490px;top:60px;width:18px;height:8px;background:#d4d0c8;"></div>
<div style="left:490.45px;top:59.65px;font:bold 8.40px/10.08px 'Liberation Sans',sans-serif;color:#8e1e2a;white-space:nowrap;transform:scaleX(0.940);transform-origin:0.55px 0;-webkit-text-stroke:0.12px #8e1e2a;">EYE</div>
<svg style="left:489.5px;top:74px" width="8" height="8"><circle cx="4" cy="4" r="3.4" fill="#fff" stroke="#e8e8e8" stroke-width="0.9"/><path d="M1.5 6.5 A3.4 3.4 0 0 1 6.5 1.5" fill="none" stroke="#606060" stroke-width="1"/><circle cx="4" cy="4" r="1.3" fill="#000"/></svg>
<svg style="left:527px;top:74px" width="8" height="8"><circle cx="4" cy="4" r="3.4" fill="#fff" stroke="#e8e8e8" stroke-width="0.9"/><path d="M1.5 6.5 A3.4 3.4 0 0 1 6.5 1.5" fill="none" stroke="#606060" stroke-width="1"/></svg>
<svg style="left:564.5px;top:74px" width="8" height="8"><circle cx="4" cy="4" r="3.4" fill="#fff" stroke="#e8e8e8" stroke-width="0.9"/><path d="M1.5 6.5 A3.4 3.4 0 0 1 6.5 1.5" fill="none" stroke="#606060" stroke-width="1"/></svg>
<div style="left:499.67px;top:74.24px;font:bold 8.20px/9.84px 'Liberation Sans',sans-serif;color:#1a1a1a;white-space:nowrap;transform:scaleX(0.945);transform-origin:0.33px 0;">OD</div>
<div style="left:537.17px;top:74.24px;font:bold 8.20px/9.84px 'Liberation Sans',sans-serif;color:#1a1a1a;white-space:nowrap;transform:scaleX(0.961);transform-origin:0.33px 0;">OS</div>
<div style="left:574.67px;top:74.24px;font:bold 8.20px/9.84px 'Liberation Sans',sans-serif;color:#1a1a1a;white-space:nowrap;transform:scaleX(0.984);transform-origin:0.33px 0;">OU</div>
<div style="left:484px;top:97px;width:113px;height:297px;border:1px solid #a4a4a4;box-sizing:border-box;box-shadow:1px 1px #f8f8f8, inset 1px 1px #f8f8f8;"></div>
<div style="left:489px;top:93px;width:40px;height:8px;background:#d4d0c8;"></div>
<div style="left:489.43px;top:92.17px;font:bold 8.80px/10.56px 'Liberation Sans',sans-serif;color:#8e1e2a;white-space:nowrap;transform:scaleX(0.874);transform-origin:0.57px 0;-webkit-text-stroke:0.12px #8e1e2a;">Encounter</div>
<div style="left:489.44px;top:101.66px;font:bold 8.60px/10.32px 'Liberation Sans',sans-serif;color:#1e1e98;white-space:nowrap;transform:scaleX(0.915);transform-origin:0.56px 0;-webkit-text-stroke:0.3px #1e1e98;">Image</div>
<div style="left:489px;top:116px;width:102px;height:12px;background:#fff;border:1px solid #5a5a5a;border-right-color:#8a8a8a;border-bottom-color:#8a8a8a;box-sizing:border-box;box-shadow:inset 1px 1px #a0a0a0;"></div>
<div style="left:581px;top:117px;width:9px;height:10px;background:#d4d0c8;border-top:1px solid #fff;border-left:1px solid #fff;border-right:1px solid #404040;border-bottom:1px solid #404040;box-sizing:border-box;box-shadow:inset -1px -1px #808080;"></div>
<svg style="left:581px;top:117px" width="9" height="10"><path d="M2.5 4 L6.5 4 L4.5 6.5 Z" fill="#000"/></svg>
<div style="left:490.52px;top:118.59px;font:bold 7.40px/8.88px 'Liberation Sans',sans-serif;color:#101038;white-space:nowrap;transform:scaleX(1.085);transform-origin:0.48px 0;">retinaw/Ora OD</div>
<div style="left:489px;top:133px;width:104px;height:151px;border:1px solid #a4a4a4;box-sizing:border-box;box-shadow:1px 1px #f8f8f8, inset 1px 1px #f8f8f8;"></div>
<div style="left:494px;top:130px;width:47px;height:8px;background:#d4d0c8;"></div>
<div style="left:494.39px;top:129.45px;font:bold 8.40px/10.08px 'Liberation Sans',sans-serif;color:#8e1e2a;white-space:nowrap;transform:scaleX(0.872);transform-origin:0.21px 0;-webkit-text-stroke:0.12px #8e1e2a;">Add Problem</div>
<div style="left:493px;top:144px;width:96px;height:118px;background:#fffff0;border:1px solid #5a5a5a;border-right-color:#8a8a8a;border-bottom-color:#8a8a8a;box-sizing:border-box;box-shadow:inset 1px 1px #a0a0a0;"></div>
<div style="left:493px;top:266px;width:46px;height:14px;background:#d4d0c8;border-top:1px solid #fff;border-left:1px solid #fff;border-right:1px solid #404040;border-bottom:1px solid #404040;box-sizing:border-box;box-shadow:inset -1px -1px #808080;"></div>
<div style="left:507.47px;top:269.51px;font:bold 7.60px/9.12px 'Liberation Sans',sans-serif;color:#f2f2f2;white-space:nowrap;transform:scaleX(0.983);transform-origin:0.23px 0;">Save</div>
<div style="left:506.77px;top:268.81px;font:bold 7.60px/9.12px 'Liberation Sans',sans-serif;color:#9a9a9a;white-space:nowrap;transform:scaleX(0.983);transform-origin:0.23px 0;">Save</div>
<div style="left:540px;top:266px;width:46px;height:14px;background:#d4d0c8;border-top:1px solid #fff;border-left:1px solid #fff;border-right:1px solid #404040;border-bottom:1px solid #404040;box-sizing:border-box;box-shadow:inset -1px -1px #808080;"></div>
<div style="left:552.40px;top:269.51px;font:bold 7.60px/9.12px 'Liberation Sans',sans-serif;color:#f2f2f2;white-space:nowrap;transform:scaleX(1.076);transform-origin:0.30px 0;">Clear</div>
<div style="left:551.70px;top:268.81px;font:bold 7.60px/9.12px 'Liberation Sans',sans-serif;color:#9a9a9a;white-space:nowrap;transform:scaleX(1.076);transform-origin:0.30px 0;">Clear</div>
<div style="left:489px;top:292px;width:104px;height:95px;border:1px solid #a4a4a4;box-sizing:border-box;box-shadow:1px 1px #f8f8f8, inset 1px 1px #f8f8f8;"></div>
<div style="left:494px;top:288px;width:30px;height:8px;background:#d4d0c8;"></div>
<div style="left:494.75px;top:288.85px;font:bold 8.40px/10.08px 'Liberation Sans',sans-serif;color:#8e1e2a;white-space:nowrap;transform:scaleX(0.913);transform-origin:0.25px 0;-webkit-text-stroke:0.12px #8e1e2a;">Section</div>
<div style="left:494.75px;top:302.25px;font:bold 8.40px/10.08px 'Liberation Sans',sans-serif;color:#1e1e98;white-space:nowrap;transform:scaleX(0.862);transform-origin:0.25px 0;-webkit-text-stroke:0.3px #1e1e98;">Section Name</div>
<div style="left:493px;top:317px;width:95px;height:24px;background:#fffff0;border:1px solid #5a5a5a;border-right-color:#8a8a8a;border-bottom-color:#8a8a8a;box-sizing:border-box;box-shadow:inset 1px 1px #a0a0a0;"></div>
<div style="left:508px;top:348px;width:71px;height:14px;background:#d4d0c8;border-top:1px solid #fff;border-left:1px solid #fff;border-right:1px solid #404040;border-bottom:1px solid #404040;box-sizing:border-box;box-shadow:inset -1px -1px #808080;"></div>
<div style="left:515.31px;top:351.71px;font:bold 7.60px/9.12px 'Liberation Sans',sans-serif;color:#1a1a1a;white-space:nowrap;transform:scaleX(1.046);transform-origin:0.49px 0;">Define Section</div>
<div style="left:508px;top:368px;width:71px;height:14px;background:#d4d0c8;border-top:1px solid #fff;border-left:1px solid #fff;border-right:1px solid #404040;border-bottom:1px solid #404040;box-sizing:border-box;box-shadow:inset -1px -1px #808080;"></div>
<div style="left:518.47px;top:371.31px;font:bold 7.60px/9.12px 'Liberation Sans',sans-serif;color:#f2f2f2;white-space:nowrap;transform:scaleX(1.042);transform-origin:0.23px 0;">Save Section</div>
<div style="left:517.77px;top:370.61px;font:bold 7.60px/9.12px 'Liberation Sans',sans-serif;color:#9a9a9a;white-space:nowrap;transform:scaleX(1.042);transform-origin:0.23px 0;">Save Section</div>
<svg style="left:0;top:0" width="600" height="433"><path d="M 195.0 225.1 Q 197.5 213.2 192.0 205.5 Q 193.6 192.1 191.5 180.0 Q 196.5 167.0 193.4 153.8 L 198.0 150.2 L 217.3 127.1 L 224.7 127.1 L 232.9 123.5 L 245.1 114.2 Q 260.0 123.8 281.4 120.9 L 295.9 136.5 L 308.6 136.8 Q 311.0 151.7 324.3 160.4 L 322.2 163.8 Q 328.3 173.8 333.3 179.8 Q 321.5 195.9 329.4 216.1 Q 313.9 222.8 309.5 246.8 L311.5 248.9 L295 235 L282 225.2 L271.5 217.6 L261 214.1 L242.5 213.6 L222 214.6 L205 218.6 L192.5 226.3 Z" fill="#f9bbbb"/><g style="mix-blend-mode:multiply"><ellipse cx="260.1" cy="193.7" rx="96.2" ry="97.8" fill="none" stroke="#747474" stroke-width="1.15"/><ellipse cx="258.8" cy="192.3" rx="76.6" ry="77.7" fill="none" stroke="#7a7a7a" stroke-width="1.1"/><ellipse cx="259.6" cy="193.6" rx="57" ry="57.6" fill="none" stroke="#9a8a8a" stroke-width="0.9"/><path d="M260.1 95.9 L260.1 155.6" stroke="#808080" stroke-width="1"/><path d="M308.2 109.0 L278.9 160.7" stroke="#808080" stroke-width="1"/><path d="M343.4 144.8 L292.6 174.6" stroke="#808080" stroke-width="1"/><path d="M356.3 193.7 L297.6 193.7" stroke="#808080" stroke-width="1"/><path d="M343.4 242.6 L292.6 212.8" stroke="#808080" stroke-width="1"/><path d="M308.2 278.4 L278.9 226.7" stroke="#808080" stroke-width="1"/><path d="M260.1 291.5 L260.1 231.8" stroke="#808080" stroke-width="1"/><path d="M212.0 278.4 L241.4 226.7" stroke="#808080" stroke-width="1"/><path d="M176.8 242.6 L227.6 212.8" stroke="#808080" stroke-width="1"/><path d="M163.9 193.7 L222.6 193.7" stroke="#808080" stroke-width="1"/><path d="M176.8 144.8 L227.6 174.6" stroke="#808080" stroke-width="1"/><path d="M212.0 109.0 L241.3 160.7" stroke="#808080" stroke-width="1"/></g><g fill="none" stroke="#a85a5a" stroke-width="0.75" style="mix-blend-mode:multiply"><path d="M226.5 167.3 Q230 172 235.8 174.3 Q243 177.5 249.8 177.8 Q256 178 262.6 177.8 Q269 178 274.3 180.1 Q280 182 283.6 186"/><path d="M233 190.5 Q236 188 240 185 Q245 181 249 179"/><path d="M241.6 155.6 Q246 159 249.8 165 Q253 171 256.8 177"/><path d="M252.1 159.1 Q258 153 264.9 149.8"/><path d="M281.2 153.3 Q279.5 158 280.1 165 Q281 171 282.4 176.6 Q283 181 283.6 187"/><path d="M284.7 163.8 Q290 160 297.6 159.1"/><path d="M292.9 175.5 Q304 172 316.2 172"/><path d="M294.1 182.4 Q306 178.5 318.5 177.8"/><path d="M297.6 188 Q309 187 320.9 187.1"/><path d="M289.4 199.5 Q288 204 285.9 206.9 Q280 212 271.9 215.1 Q265 217 257.9 216.5"/><path d="M292.9 199.5 Q297 204 299.9 209.3 Q303 216 304.6 223.2"/><path d="M299.9 200 Q309 202 318.5 206.9"/><path d="M295.2 206.9 Q304 211 311.5 217.4"/><path d="M236 174.5 Q230 180 226 186"/><path d="M271.9 215.1 Q266 225 262 236"/><path d="M299 215 Q294 225 290 238"/></g><ellipse cx="288" cy="193.1" rx="5.6" ry="5.6" fill="none" stroke="#a05a5a" stroke-width="0.9" style="mix-blend-mode:multiply"/><path d="M192 226.3 L205 218.6 L222 214.6 L242.5 213.6 L261 214.1 L271.5 217.6 L282 225.2 L295 235 L311.5 248.9 A76.6 77.7 0 0 1 192 226.3 Z" fill="#4a22de" fill-opacity="0.74"/><path d="M192 226.3 L205 218.6 L222 214.6 L242.5 213.6 L261 214.1 L271.5 217.6 L282 225.2 L295 235 L311.5 248.9" fill="none" stroke="#e4dcfa" stroke-width="1.2" transform="translate(0 -0.6)"/><path d="M192 226.3 L205 218.6 L222 214.6 L242.5 213.6 L261 214.1 L271.5 217.6 L282 225.2 L295 235 L311.5 248.9" fill="none" stroke="#2a22b0" stroke-width="0.9" transform="translate(0 1)"/><path d="M192 227 Q240 231.5 311.5 248.5" fill="none" stroke="#2a28c0" stroke-width="1.3"/><path d="M192 226.5 Q203 231 202.7 243.5 Q214 244 221.8 260 Q237 256 248.5 267.6 Q262 258 280 265.5 Q285 253 297 253 Q306 251 311.5 248.9 A76.6 77.7 0 0 1 192 226.5 Z" fill="#ffffff" fill-opacity="0.13"/><path d="M192 226.5 Q203 231 202.7 243.5 Q214 244 221.8 260 Q237 256 248.5 267.6 Q262 258 280 265.5 Q285 253 297 253 Q306 251 311.5 248.9" fill="none" stroke="#12128a" stroke-width="1.5"/><path d="M192 226.3 Q195 214 184 206 Q191 192 183.8 179.5 Q194 166 193.1 153.6 L197.7 150 L217.1 126.8 L224.5 126.8 L232.8 123.1 L245 113.8 Q260 121 282.3 118 L297.3 134.2 L310.5 134.6 Q313 150 326.9 159.1 L324.7 162.6 Q331 173 336.2 179.3 Q324 196 332.2 217 Q316 224 311.5 248.9" fill="none" stroke="#14207a" stroke-width="1.6" stroke-linejoin="round"/><circle cx="229.7" cy="134.8" r="1.6" fill="#d42030"/><circle cx="220" cy="138.9" r="1.2" fill="#d42030"/><circle cx="214.4" cy="142.1" r="1.1" fill="#d42030"/><circle cx="228.9" cy="142.9" r="1.2" fill="#d42030"/><circle cx="237" cy="143.7" r="1.1" fill="#d42030"/><circle cx="209.5" cy="150.2" r="1.1" fill="#d42030"/><circle cx="233" cy="151.8" r="0.9" fill="#d42030"/><circle cx="237" cy="153.4" r="1" fill="#d42030"/><circle cx="213.6" cy="155.8" r="1" fill="#d42030"/><circle cx="210.3" cy="159.9" r="1.1" fill="#d42030"/><circle cx="220" cy="162.3" r="1.1" fill="#d42030"/><circle cx="225.7" cy="159.9" r="1" fill="#d42030"/><circle cx="231.3" cy="160.7" r="1" fill="#d42030"/><circle cx="216" cy="149" r="0.8" fill="#d42030"/><circle cx="228" cy="147.5" r="0.9" fill="#d42030"/><ellipse cx="223.3" cy="150.2" rx="5.4" ry="5" fill="#7462c6"/><circle cx="223.5" cy="151" r="2.2" fill="#b04070" opacity="0.6"/><circle cx="259.1" cy="200.7" r="1.3" fill="#8a3a9a"/><rect x="221.1" y="228.3" width="8.3" height="8" fill="#f2ecf6" stroke="#e0a8c0" stroke-width="0.6"/><path d="M222.6 231.5 Q225.29999999999998 236.5 228.1 231.5 L226.7 229.9 L225.2 231.9 L224.0 229.9 Z" fill="#b01c3c"/><rect x="243.3" y="236.7" width="8.3" height="8" fill="#f2ecf6" stroke="#e0a8c0" stroke-width="0.6"/><path d="M244.8 239.89999999999998 Q247.5 244.89999999999998 250.3 239.89999999999998 L248.9 238.29999999999998 L247.4 240.29999999999998 L246.20000000000002 238.29999999999998 Z" fill="#b01c3c"/></svg>
<div style="left:255.40px;top:84.23px;font:bold 10.00px/12.0px 'Liberation Sans',sans-serif;color:#1c1c1c;white-space:nowrap;transform:scaleX(0.917);transform-origin:0.10px 0;">XII</div>
<div style="left:312.85px;top:99.73px;font:bold 10.00px/12.0px 'Liberation Sans',sans-serif;color:#1c1c1c;white-space:nowrap;">I</div>
<div style="left:348.65px;top:140.93px;font:bold 10.00px/12.0px 'Liberation Sans',sans-serif;color:#1c1c1c;white-space:nowrap;transform:scaleX(0.941);transform-origin:0.65px 0;">II</div>
<div style="left:358.25px;top:188.13px;font:bold 10.00px/12.0px 'Liberation Sans',sans-serif;color:#1c1c1c;white-space:nowrap;transform:scaleX(0.900);transform-origin:0.65px 0;">III</div>
<div style="left:344.85px;top:241.03px;font:bold 10.00px/12.0px 'Liberation Sans',sans-serif;color:#1c1c1c;white-space:nowrap;transform:scaleX(1.051);transform-origin:0.65px 0;">IV</div>
<div style="left:313.95px;top:276.13px;font:bold 10.00px/12.0px 'Liberation Sans',sans-serif;color:#1c1c1c;white-space:nowrap;">V</div>
<div style="left:255.55px;top:294.53px;font:bold 10.00px/12.0px 'Liberation Sans',sans-serif;color:#1c1c1c;white-space:nowrap;transform:scaleX(1.034);transform-origin:0.05px 0;">VI</div>
<div style="left:199.25px;top:278.53px;font:bold 10.00px/12.0px 'Liberation Sans',sans-serif;color:#1c1c1c;white-space:nowrap;transform:scaleX(0.896);transform-origin:0.05px 0;">VII</div>
<div style="left:160.45px;top:239.83px;font:bold 10.00px/12.0px 'Liberation Sans',sans-serif;color:#1c1c1c;white-space:nowrap;transform:scaleX(0.909);transform-origin:0.05px 0;">VIII</div>
<div style="left:153.05px;top:188.13px;font:bold 10.00px/12.0px 'Liberation Sans',sans-serif;color:#1c1c1c;white-space:nowrap;transform:scaleX(0.971);transform-origin:0.65px 0;">IX</div>
<div style="left:166.90px;top:137.53px;font:bold 10.00px/12.0px 'Liberation Sans',sans-serif;color:#1c1c1c;white-space:nowrap;">X</div>
<div style="left:200.30px;top:98.53px;font:bold 10.00px/12.0px 'Liberation Sans',sans-serif;color:#1c1c1c;white-space:nowrap;transform:scaleX(1.075);transform-origin:0.10px 0;">XI</div>
<div style="left:156.55px;top:87.90px;font:bold 11.20px/13.44px 'Liberation Sans',sans-serif;color:#101010;white-space:nowrap;transform:scaleX(1.031);transform-origin:0.45px 0;">OD</div>
</body></html>
